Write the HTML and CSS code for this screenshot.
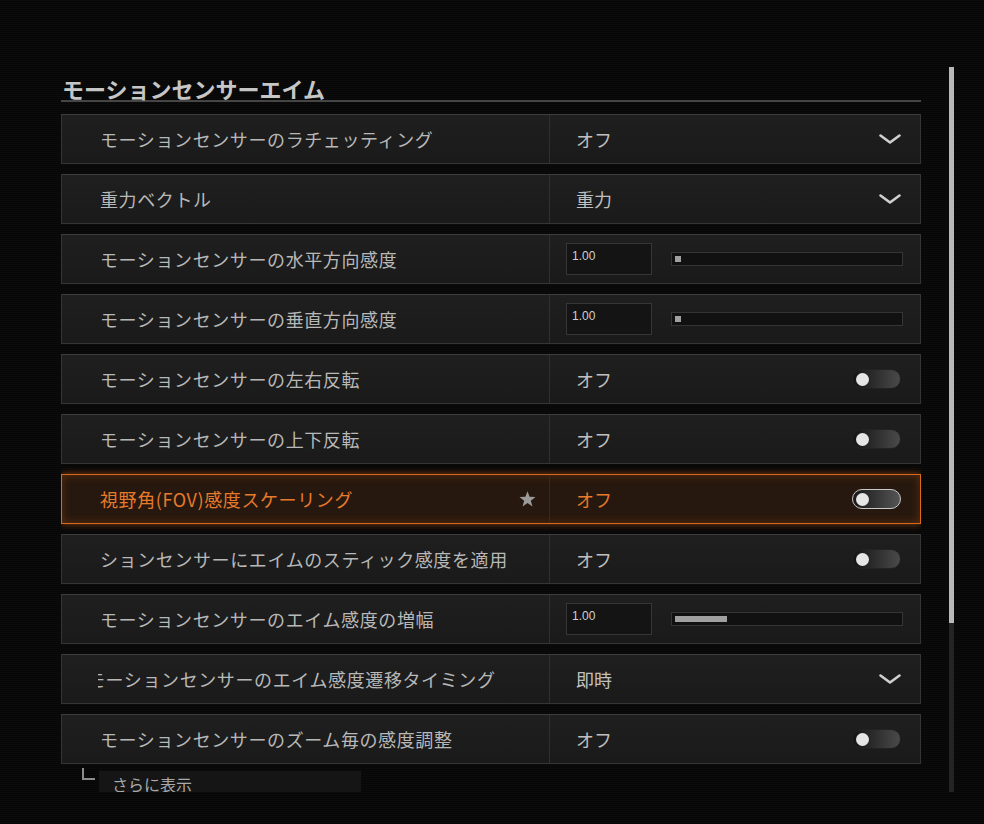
FILE: index.html
```html
<html>
<head>
<meta name="viewport" content="width=device-width, initial-scale=1">
<link rel="stylesheet" href="styles.css">
</head>
<body>
<div class="screen">
  <div class="viewport">
    <h2 class="section-title">モーションセンサーエイム</h2>

    <div class="row">
      <div class="label">モーションセンサーのラチェッティング</div>
      <div class="value"><span>オフ</span>
        <svg class="chevron" width="22" height="10" viewBox="0 0 22 10"><polyline points="1.5,1.5 11,8.5 20.5,1.5"/></svg>
      </div>
    </div>

    <div class="row">
      <div class="label">重力ベクトル</div>
      <div class="value"><span>重力</span>
        <svg class="chevron" width="22" height="10" viewBox="0 0 22 10"><polyline points="1.5,1.5 11,8.5 20.5,1.5"/></svg>
      </div>
    </div>

    <div class="row">
      <div class="label">モーションセンサーの水平方向感度</div>
      <div class="value slider-cell">
        <div class="num-box">1.00</div>
        <div class="track"><div class="fill" style="width:6px"></div></div>
      </div>
    </div>

    <div class="row">
      <div class="label">モーションセンサーの垂直方向感度</div>
      <div class="value slider-cell">
        <div class="num-box">1.00</div>
        <div class="track"><div class="fill" style="width:6px"></div></div>
      </div>
    </div>

    <div class="row">
      <div class="label">モーションセンサーの左右反転</div>
      <div class="value"><span>オフ</span><div class="toggle"><div class="knob"></div></div></div>
    </div>

    <div class="row">
      <div class="label">モーションセンサーの上下反転</div>
      <div class="value"><span>オフ</span><div class="toggle"><div class="knob"></div></div></div>
    </div>

    <div class="row active">
      <div class="label">視野角(FOV)感度スケーリング
        <svg class="star" width="17" height="16" viewBox="0 0 24 23"><polygon points="12,0.5 15,8.4 23.5,8.7 16.8,14 19.1,22.2 12,17.4 4.9,22.2 7.2,14 0.5,8.7 9,8.4"/></svg>
      </div>
      <div class="value"><span>オフ</span><div class="toggle"><div class="knob"></div></div></div>
    </div>

    <div class="row">
      <div class="label">ションセンサーにエイムのスティック感度を適用</div>
      <div class="value"><span>オフ</span><div class="toggle"><div class="knob"></div></div></div>
    </div>

    <div class="row">
      <div class="label">モーションセンサーのエイム感度の増幅</div>
      <div class="value slider-cell">
        <div class="num-box">1.00</div>
        <div class="track"><div class="fill" style="width:52px"></div></div>
      </div>
    </div>

    <div class="row">
      <div class="label label-clip"><span class="marquee">モーションセンサーのエイム感度遷移タイミング</span></div>
      <div class="value"><span>即時</span>
        <svg class="chevron" width="22" height="10" viewBox="0 0 22 10"><polyline points="1.5,1.5 11,8.5 20.5,1.5"/></svg>
      </div>
    </div>

    <div class="row">
      <div class="label">モーションセンサーのズーム毎の感度調整</div>
      <div class="value"><span>オフ</span><div class="toggle"><div class="knob"></div></div></div>
    </div>

    <div class="more">
      <span class="corner"></span>
      <div class="more-btn">さらに表示</div>
    </div>
  </div>
  <div class="scrollbar"><div class="thumb"></div></div>
</div>
</body>
</html>
```

FILE: styles.css
```css
body {
  margin: 0;
  background: #090909;
  background-image: repeating-linear-gradient(#0b0b0b 0 1px, #070707 1px 2px);
  font-family: "Noto Sans CJK JP", "Noto Sans", sans-serif;
  height: 824px;
  overflow: hidden;
}
.screen {
  display: flex;
  padding-left: 61px;
}
.viewport {
  width: 860px;
  height: 725px;
  margin-top: 67px;
  overflow: hidden;
}
.section-title {
  margin: 9px 0 12px;
  padding-left: 1px;
  font-size: 22px;
  line-height: 24px;
  font-weight: bold;
  color: #c6c6c6;
  border-bottom: 2px solid #454545;
}
.row {
  box-sizing: border-box;
  height: 50px;
  margin-bottom: 10px;
  display: grid;
  grid-template-columns: 487px 1fr;
  background: linear-gradient(#1f1f1f, #1a1a1a);
  border: 1px solid #353535;
  border-top-color: #3e3e3e;
}
.label {
  display: flex;
  align-items: center;
  justify-content: space-between;
  padding-left: 38px;
  padding-right: 13px;
  font-size: 18px;
  letter-spacing: 0.6px;
  color: #b8b8b8;
  white-space: nowrap;
}
.label-clip {
  padding-left: 0;
  margin-left: 36px;
  overflow: hidden;
  justify-content: flex-start;
}
.marquee {
  margin-left: -11px;
}
.value {
  display: flex;
  align-items: center;
  justify-content: space-between;
  padding-left: 26px;
  padding-right: 19px;
  border-left: 1px solid #303030;
  font-size: 18px;
  color: #c0c0c0;
}
.chevron polyline {
  fill: none;
  stroke: #cfcfcf;
  stroke-width: 2.6;
  stroke-linecap: round;
  stroke-linejoin: round;
}
.slider-cell {
  padding-left: 16px;
  padding-right: 18px;
  justify-content: flex-start;
  gap: 19px;
}
.num-box {
  box-sizing: border-box;
  width: 86px;
  height: 32px;
  padding: 5px 5px 0;
  background: #141414;
  border: 1px solid #363636;
  font-family: "Liberation Sans", sans-serif;
  font-size: 12px;
  color: #cfcfcf;
}
.track {
  box-sizing: border-box;
  width: 232px;
  height: 14px;
  padding: 3px;
  background: #111111;
  border: 1px solid #353535;
}
.fill {
  height: 6px;
  background: #a0a0a0;
}
.toggle {
  box-sizing: border-box;
  width: 49px;
  height: 20px;
  border-radius: 10px;
  padding: 3px;
  background: linear-gradient(to right, #141414, #4a4a4a);
  border: 1px solid #222;
}
.knob {
  width: 13px;
  height: 13px;
  border-radius: 50%;
  background: #e6e6e6;
}
.row.active {
  background: #26180e;
  border: 1px solid #d8691d;
  box-shadow: 0 0 7px rgba(230, 110, 30, 0.55), inset 0 0 10px rgba(220, 100, 20, 0.3);
}
.row.active .label,
.row.active .value {
  color: #e77a2b;
}
.row.active .value {
  border-left-color: #3f2713;
}
.row.active .toggle {
  border: 1px solid #c8c8c8;
  background: linear-gradient(to right, #181818, #555);
}
.star {
  fill: #9a9a9a;
}
.more {
  display: flex;
  align-items: flex-start;
  padding-left: 21px;
  margin-top: -3px;
}
.corner {
  width: 11px;
  height: 10px;
  margin-top: -3px;
  margin-right: 4px;
  border-left: 2px solid #8c8c8c;
  border-bottom: 2px solid #8c8c8c;
}
.more-btn {
  box-sizing: border-box;
  width: 262px;
  height: 30px;
  padding: 2px 0 0 13px;
  background: #151515;
  font-size: 16px;
  line-height: 22px;
  color: #a9a9a9;
}
.scrollbar {
  width: 5px;
  height: 725px;
  margin-top: 67px;
  margin-left: 28px;
  background: #242424;
}
.thumb {
  height: 556px;
  background: #b9b9b9;
}
```
